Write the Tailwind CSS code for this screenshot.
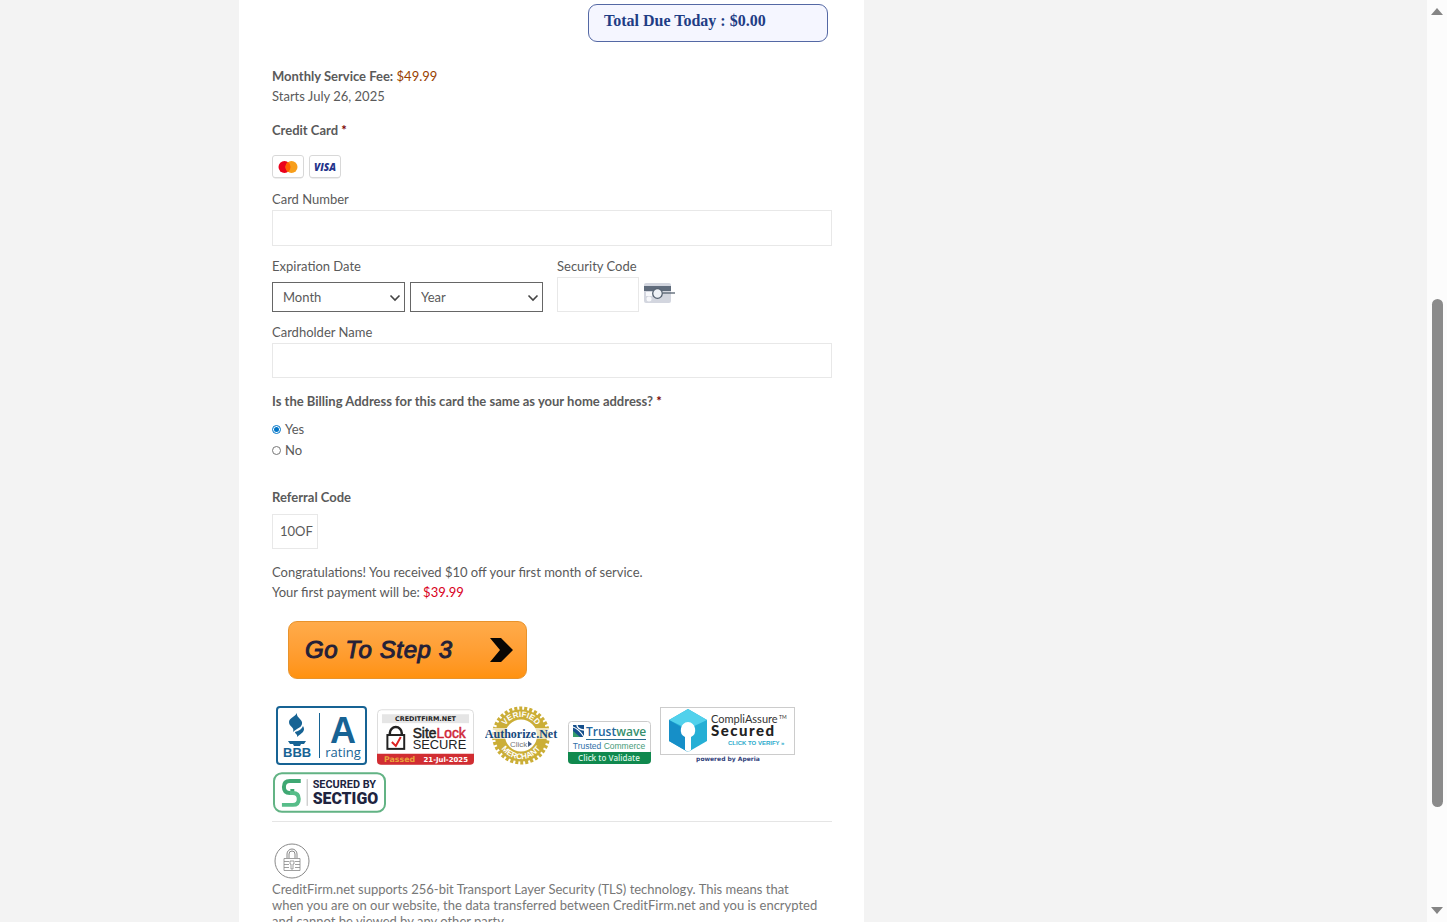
<!DOCTYPE html>
<html lang="en">
<head>
<meta charset="utf-8">
<meta name="viewport" content="width=device-width, initial-scale=1">
<title>CreditFirm.net - Payment</title>
<script src="https://cdn.jsdelivr.net/npm/@tailwindcss/browser@4"></script>
</head>
<body class="flex h-screen overflow-hidden bg-[#f3f3f3] font-['Lato',sans-serif] text-[13px] leading-5 text-[#5a5a5a]">
<div class="grid h-full min-w-0 flex-1 grid-cols-[239fr_625fr_563fr] overflow-hidden">
<main class="col-start-2 flex flex-col bg-white pt-1 pr-8 pl-[33px]">
  <div class="mr-1 flex h-[38px] w-60 shrink-0 items-center self-end rounded-[9px] border border-[#5468a4] bg-[#f5f6ff] px-[15px] pb-1 font-['Liberation_Serif',serif] text-base font-bold text-[#1f3d85]">Total Due Today : $0.00</div>

  <p class="mt-6"><strong>Monthly Service Fee:</strong> <span class="text-[#993f00]">$49.99</span><br>Starts July 26, 2025</p>

  <form class="mt-[14px] flex flex-col">
    <h2 class="font-bold">Credit Card <span class="text-[#790000]">*</span></h2>
    <div class="mt-[15px] flex gap-[5px]">
      <svg class="h-6 w-8" viewBox="0 0 32 24" role="img" aria-label="Mastercard"><rect x="1" y="1.5" width="30" height="22" rx="2.500" fill="#ddd"/><rect x=".5" y=".5" width="31" height="22" rx="2.500" fill="#fff" stroke="#d8d8d8"/><circle cx="12.500" cy="12" r="6" fill="#eb001b"/><circle cx="19.500" cy="12" r="6" fill="#f79e1b"/><path d="M16 7.100a6 6 0 0 1 0 9.800a6 6 0 0 1 0-9.800" fill="#ff5f00"/></svg>
      <svg class="h-6 w-8" viewBox="0 0 32 24" role="img" aria-label="Visa"><rect x="1" y="1.500" width="30" height="22" rx="2.500" fill="#ddd"/><rect x=".5" y=".5" width="31" height="22" rx="2.500" fill="#fff" stroke="#d8d8d8"/><text x="16" y="16" text-anchor="middle" font-family="Open Sans" font-size="10" font-weight="800" font-style="italic" fill="#25348b">VISA</text></svg>
    </div>
    <label for="num" class="mt-[10px]">Card Number</label>
    <input id="num" class="mt-px h-9 w-full border border-[#e8e8e8] px-2">
    <div class="mt-[10px] flex">
      <fieldset class="flex flex-col">
        <legend>Expiration Date</legend>
        <div class="mt-[6px] flex gap-[5px]">
          <div class="relative"><select aria-label="Expiration month" class="h-[30px] w-[133px] appearance-none border border-[#666] bg-white px-[10px] pb-px"><option>Month</option></select><svg class="pointer-events-none absolute top-3 right-1 h-2 w-3" viewBox="0 0 12 8" fill="none" stroke="#444" stroke-width="1.600"><path d="M1.500 1.500L6 6l4.500-4.500"/></svg></div>
          <div class="relative"><select aria-label="Expiration year" class="h-[30px] w-[133px] appearance-none border border-[#666] bg-white px-[10px] pb-px"><option>Year</option></select><svg class="pointer-events-none absolute top-3 right-1 h-2 w-3" viewBox="0 0 12 8" fill="none" stroke="#444" stroke-width="1.600"><path d="M1.500 1.500L6 6l4.500-4.500"/></svg></div>
        </div>
      </fieldset>
      <div class="ml-[14px] flex flex-col">
        <label for="cvv">Security Code</label>
        <div class="mt-px flex">
          <input id="cvv" class="h-[35px] w-[82px] border border-[#e8e8e8] px-2">
          <svg class="mt-[5px] ml-[5px] h-[22px] w-8" viewBox="0 0 32 22"><rect width="27" height="20" y="1" rx="2" fill="#d3d6df"/><rect y="4" width="27" height="5" fill="#606c7c"/><rect x="2" y="10" width="17" height="4" fill="#f7f8fb"/><circle cx="5" cy="17" r="2.500" fill="#f7f8fb"/><circle cx="13.500" cy="11.500" r="4.800" fill="#eef1f6" stroke="#54606f" stroke-width="1.300"/><path d="M18.500 11H31" stroke="#54606f" stroke-width="1.300"/></svg>
        </div>
      </div>
    </div>
    <label for="holder" class="mt-[10px]">Cardholder Name</label>
    <input id="holder" class="mt-px h-[35px] w-full border border-[#e8e8e8] px-2">

    <fieldset class="mt-[13px]">
      <legend class="font-bold">Is the Billing Address for this card the same as your home address? <span class="text-[#790000]">*</span></legend>
      <div class="mt-2 flex flex-col leading-[21px]">
        <label class="flex items-center gap-1"><input type="radio" name="same" checked class="flex size-[9px] appearance-none items-center justify-center rounded-full border border-[#777] before:size-[5px] before:rounded-full checked:border-[#0075c8] checked:before:bg-[#0075c8]">Yes</label>
        <label class="flex items-center gap-1"><input type="radio" name="same" class="flex size-[9px] appearance-none items-center justify-center rounded-full border border-[#777] before:size-[5px] before:rounded-full checked:border-[#0075c8] checked:before:bg-[#0075c8]">No</label>
      </div>
    </fieldset>
    <label for="ref" class="mt-[26px] font-bold">Referral Code</label>
    <input id="ref" value="10OF" class="mt-[7px] h-[35px] w-[46px] border border-[#e8e8e8] pb-px pl-[7px]">
    <p class="mt-[13px]">Congratulations! You received $10 off your first month of service.<br>Your first payment will be: <span class="text-[#d9001b]">$39.99</span></p>
    <button type="submit" class="mt-[19px] ml-4 flex h-[58px] w-[239px] items-center justify-between rounded-[9px] border border-[#e8932c] bg-linear-to-b from-[#ffab4a] to-[#ff920e] pr-[13px] pl-4 font-['Liberation_Sans',sans-serif] text-2xl tracking-wide text-[#241f38] italic [-webkit-text-stroke:1px_#241f38]">Go To Step 3
      <svg class="h-6 w-[23px]" viewBox="0 0 23 24"><path d="M0 0h11l12 12-12 12H0l10-12z" fill="#080604"/></svg>
    </button>
  </form>

  <div class="mt-[27px] flex flex-wrap items-end gap-y-[7px]">
    <a href="#bbb" class="ml-1"><svg class="h-[59px] w-[91px]" viewBox="0 0 91 59" role="img" aria-label="BBB A rating"><rect x="1" y="1" width="89" height="57" rx="3" fill="#fff" stroke="#176394" stroke-width="2"/><g fill="#176394"><path d="M21 7c-1 5 6 6 5 11-1 4-5 4-9 8 2-5-4-5-4-10 0-4 6-5 8-9z"/><path d="M27 20c3 5-1 7-6 11 1-3-2-3-2-5 4-1 7-3 8-6zM12 35h18l-2 3h-3l-1 2h-6l-1-2h-3z"/><text x="7" y="51" font-family="Liberation Sans" font-weight="700" font-size="13">BBB</text><text x="67" y="37" text-anchor="middle" font-family="Liberation Sans" font-weight="700" font-size="36">A</text><text x="67" y="51" text-anchor="middle" font-family="Open Sans" font-size="13">rating</text></g><path d="M43.500 7v45" stroke="#176394"/></svg></a>
    <a href="#sitelock" class="ml-[10px]"><svg class="h-[56px] w-[97px]" viewBox="0 0 98 56" role="img" aria-label="SiteLock Secure"><rect x=".5" y=".5" width="97" height="55" rx="4" fill="#fff" stroke="#ddd"/><rect x="5" y="5" width="88" height="9" fill="#e5e5e5"/><text x="49" y="12" text-anchor="middle" font-family="DejaVu Sans" font-size="6.500" font-weight="700" fill="#222">CREDITFIRM.NET</text><path d="M13 26v-2a6 6 0 0 1 12 0v2" fill="none" stroke="#222" stroke-width="2.500"/><rect x="10.500" y="26" width="17" height="14" fill="#fff" stroke="#222" stroke-width="2"/><path d="M15 33l4 4 5-9" fill="none" stroke="#d22" stroke-width="2"/><text x="36" y="29" font-family="Liberation Sans" font-size="14" fill="#222" stroke="#222" stroke-width=".5">Site<tspan fill="#cf2436" stroke="#cf2436">Lock</tspan></text><text x="36" y="40" font-family="Liberation Sans" font-size="13" fill="#222">SECURE</text><path d="M0 45h98v7q0 4-4 4H4q-4 0-4-4z" fill="#d12d32"/><text x="7" y="53" font-family="DejaVu Sans" font-size="8" font-weight="700" fill="#e9a33b">Passed</text><text x="47" y="53" font-family="DejaVu Sans" font-size="7" font-weight="700" fill="#fff">21-Jul-2025</text></svg></a>
    <a href="#authorize" class="ml-[11px]"><svg class="h-[59px] w-[74px]" viewBox="0 0 74 59" role="img" aria-label="Authorize.Net Verified Merchant"><circle cx="36" cy="29.500" r="27" fill="none" stroke="#cbae37" stroke-width="4" stroke-dasharray="3 2"/><circle cx="36" cy="29.500" r="21" fill="#fff" stroke="#cbae37" stroke-width="10"/><path id="au" d="M17.500 29.500a18.500 18.500 0 0 1 37 0" fill="none"/><path id="al" d="M12.500 29.500a23.500 23.500 0 0 0 47 0" fill="none"/><g font-family="Liberation Sans" font-weight="700" font-size="8" fill="#fff"><text text-anchor="middle"><textPath href="#au" startOffset="50%">VERIFIED</textPath></text><text text-anchor="middle"><textPath href="#al" startOffset="50%">MERCHANT</textPath></text></g><path d="M0 22h72v11H0z" fill="#fff" opacity=".65"/><text x="36" y="32" text-anchor="middle" font-family="Liberation Serif" font-weight="700" font-size="12" fill="#17497d">Authorize.Net</text><text x="25" y="41" font-family="Liberation Sans" font-size="8" fill="#777">Click</text><path d="M43 35v6l4-3z" fill="#445a80"/></svg></a>
    <a href="#trustwave" class="ml-[9px] pb-px"><svg class="h-[43px] w-[83px]" viewBox="0 0 83 43" role="img" aria-label="Trustwave Trusted Commerce"><rect x=".5" y=".5" width="82" height="42" rx="3" fill="#fff" stroke="#ccc"/><path d="M5 4h11v12H5z" fill="#16508d"/><path d="M5 6q6 2 11 10M9 4q0 4 7 5" stroke="#fff" stroke-width="1.300" fill="none"/><path d="M5 10l7 6H5z" fill="#369d6c"/><text x="18" y="15" font-family="Open Sans" font-size="12" font-weight="600" fill="#23659d">Trust<tspan fill="#368f6d">wave</tspan></text><path d="M18 18.500h60" stroke="#286c94"/><text x="41" y="28" text-anchor="middle" font-family="Liberation Sans" font-size="8.500" fill="#3071a8">Trusted <tspan fill="#459a78">Commerce</tspan></text><path d="M0 31h83v8q0 4-4 4H4q-4 0-4-4z" fill="#10894e"/><text x="41" y="39.500" text-anchor="middle" font-family="Open Sans" font-size="8" font-weight="600" fill="#d9f3e3">Click to Validate</text></svg></a>
    <a href="#compliassure" class="ml-[9px] pb-px"><svg class="h-[57px] w-[135px]" viewBox="0 0 135 57" role="img" aria-label="CompliAssure Secured"><rect x=".5" y=".5" width="134" height="47" fill="#fff" stroke="#ccc"/><path d="M28 2l19 11v21L28 45 9 34V13z" fill="#25afd5"/><path d="M28 2l19 11-19 9L9 13z" fill="#51d1ec"/><path d="M28 24L9 13v21l19 11z" fill="#168fc8"/><path d="M28 15a8 8 0 0 0-3 15v13l3 2 3-2V30a8 8 0 0 0-3-15z" fill="#fff"/><text x="51" y="16" font-family="Lato" font-size="11" fill="#333">CompliAssure</text><text x="119" y="12" font-family="Lato" font-size="5" fill="#333">TM</text><text x="51" y="29" font-family="Lato" font-size="15" letter-spacing="1.500" font-weight="900" fill="#222">Secured</text><text x="68" y="38" font-family="Liberation Sans" font-size="6" font-weight="700" fill="#2baacb">CLICK TO VERIFY »</text><text x="68" y="54" text-anchor="middle" font-family="DejaVu Sans" font-size="6" font-weight="700" fill="#303f7b">powered by Aperia</text></svg></a>
    <a href="#sectigo" class="ml-px"><svg class="h-[41px] w-[113px]" viewBox="0 0 114 41" role="img" aria-label="Secured by Sectigo"><rect x="1" y="1" width="112" height="39" rx="8" fill="#fff" stroke="#62b384" stroke-width="2"/><path d="M28 9h-11q-6 0-6 6t6 6h2.500v-4" fill="none" stroke="#3fa873" stroke-width="4"/><path d="M9 33h11q6 0 6-6t-6-6h-3" fill="none" stroke="#57bd89" stroke-width="4"/><path d="M34.500 7v27" stroke="#bbb"/><g font-family="Roboto" font-weight="700" fill="#20243f"><text x="40" y="16" font-size="11">SECURED BY</text><text x="40" y="32" font-size="16" font-weight="900">SECTIGO</text></g></svg></a>
  </div>
  <hr class="mt-2 border-[#e5e5e5]">
  <svg class="mt-[21px] ml-[2px] size-9 shrink-0" viewBox="0 0 36 36" fill="none" stroke="#888"><circle cx="18" cy="18" r="17"/><path d="M13 15v-4a5 5 0 0 1 10 0v4M15 15v-4a3 3 0 0 1 6 0v4"/><path d="M10 15.500h16v12H10zM10 18.500h5M10 21.500h5M10 24.500h5M21 18.500h5M21 21.500h5M21 24.500h5M16 18h4v3h-1v5h-2v-5h-1z" stroke-width=".8"/></svg>
  <p class="mt-[2px] leading-4 text-[#777]">CreditFirm.net supports 256-bit Transport Layer Security (TLS) technology. This means that<br>when you are on our website, the data transferred between CreditFirm.net and you is encrypted<br>and cannot be viewed by any other party.</p>
</main>
</div>
<div class="flex h-full w-5 shrink-0 flex-col items-center bg-[#fcfcfc] py-2" aria-hidden="true">
  <svg class="h-[7px] w-3" viewBox="0 0 12 7"><path d="M6 0l6 7H0z" fill="#858585"/></svg>
  <div class="flex w-full flex-1 flex-col items-center"><div class="basis-[31.8%]"></div><div class="w-[11px] basis-[57%] rounded-full bg-[#8b8b8b]"></div></div>
  <svg class="h-[7px] w-3" viewBox="0 0 12 7"><path d="M0 0h12L6 7z" fill="#858585"/></svg>
</div>
</body>
</html>
